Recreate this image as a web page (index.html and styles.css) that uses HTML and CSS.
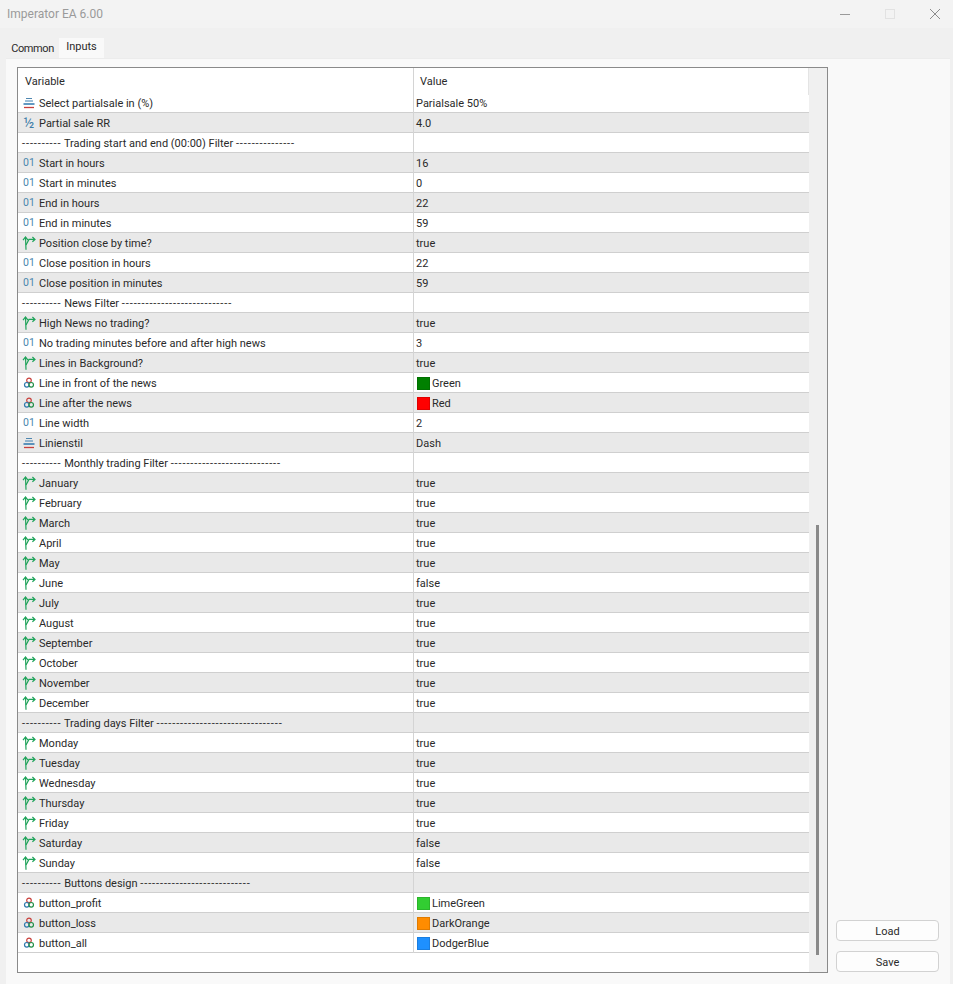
FILE: index.html
```html
<!DOCTYPE html>
<html lang="en">
<head>
<meta charset="utf-8">
<title>Imperator EA 6.00</title>
<link rel="stylesheet" href="styles.css">
</head>
<body>
<svg class="defs" width="0" height="0" aria-hidden="true">
  <symbol id="i-enum" viewBox="0 0 14 14">
    <path d="M4 2.5h6" stroke="#4f87b0" stroke-width="1" fill="none"/>
    <path d="M3 5h8" stroke="#3d7fb0" stroke-width="1" fill="none"/>
    <path d="M1.5 8h11" stroke="#1f6da8" stroke-width="1.4" fill="none"/>
    <path d="M2 11.5h10" stroke="#c8403c" stroke-width="1.3" fill="none"/>
  </symbol>
  <symbol id="i-bool" viewBox="0 0 14 14">
    <path d="M4 13.8L3.5 1.2M1 4.2L3.5 1L6 4.2" stroke="#1fa35a" stroke-width="1.2" fill="none"/>
    <path d="M4 9L7 3.4H13M10.4 1L13 3.4L10.4 5.8" stroke="#1fa35a" stroke-width="1.2" fill="none"/>
  </symbol>
  <symbol id="i-color" viewBox="0 0 14 14">
    <circle cx="7" cy="4.4" r="2.3" stroke="#c8403c" stroke-width="1.2" fill="none"/>
    <circle cx="4.8" cy="8.8" r="2.3" stroke="#2f78ad" stroke-width="1.2" fill="none"/>
    <circle cx="9.2" cy="8.8" r="2.3" stroke="#23904a" stroke-width="1.2" fill="none"/>
  </symbol>
</svg>

<header class="titlebar">
  <span class="title">Imperator EA 6.00</span>
  <div class="controls">
    <svg class="ctl" width="12" height="12" viewBox="0 0 12 12"><path d="M1 6.5h10" stroke="#9a9a9a" fill="none"/></svg>
    <svg class="ctl" width="12" height="12" viewBox="0 0 12 12"><rect x="1.5" y="1.5" width="9" height="9" stroke="#e2e2e2" fill="none"/></svg>
    <svg class="ctl" width="12" height="12" viewBox="0 0 12 12"><path d="M1 1l10 10M11 1L1 11" stroke="#8c8c8c" fill="none"/></svg>
  </div>
</header>

<nav class="tabs">
  <span class="tab">Common</span>
  <span class="tab active">Inputs</span>
</nav>

<main class="panel">
  <section class="box">
    <div class="list">
      <div class="row head"><div class="var">Variable</div><div class="val">Value</div></div>
      <div id="rows">
        <div class="row"><div class="var"><svg class="ic"><use href="#i-enum"/></svg>Select partialsale in (%)</div><div class="val">Parialsale 50%</div></div>
        <div class="row"><div class="var"><span class="ic half">½</span>Partial sale RR</div><div class="val">4.0</div></div>
        <div class="row"><div class="var"><span class="sec"><span class="dash">----------</span> Trading start and end (00:00) Filter <span class="dash">---------------</span></span></div><div class="val"></div></div>
        <div class="row"><div class="var"><span class="ic num">01</span>Start in hours</div><div class="val">16</div></div>
        <div class="row"><div class="var"><span class="ic num">01</span>Start in minutes</div><div class="val">0</div></div>
        <div class="row"><div class="var"><span class="ic num">01</span>End in hours</div><div class="val">22</div></div>
        <div class="row"><div class="var"><span class="ic num">01</span>End in minutes</div><div class="val">59</div></div>
        <div class="row"><div class="var"><svg class="ic"><use href="#i-bool"/></svg>Position close by time?</div><div class="val">true</div></div>
        <div class="row"><div class="var"><span class="ic num">01</span>Close position in hours</div><div class="val">22</div></div>
        <div class="row"><div class="var"><span class="ic num">01</span>Close position in minutes</div><div class="val">59</div></div>
        <div class="row"><div class="var"><span class="sec"><span class="dash">----------</span> News Filter <span class="dash">----------------------------</span></span></div><div class="val"></div></div>
        <div class="row"><div class="var"><svg class="ic"><use href="#i-bool"/></svg>High News no trading?</div><div class="val">true</div></div>
        <div class="row"><div class="var"><span class="ic num">01</span>No trading minutes before and after high news</div><div class="val">3</div></div>
        <div class="row"><div class="var"><svg class="ic"><use href="#i-bool"/></svg>Lines in Background?</div><div class="val">true</div></div>
        <div class="row"><div class="var"><svg class="ic"><use href="#i-color"/></svg>Line in front of the news</div><div class="val"><span class="sw green"></span>Green</div></div>
        <div class="row"><div class="var"><svg class="ic"><use href="#i-color"/></svg>Line after the news</div><div class="val"><span class="sw red"></span>Red</div></div>
        <div class="row"><div class="var"><span class="ic num">01</span>Line width</div><div class="val">2</div></div>
        <div class="row"><div class="var"><svg class="ic"><use href="#i-enum"/></svg>Linienstil</div><div class="val">Dash</div></div>
        <div class="row"><div class="var"><span class="sec"><span class="dash">----------</span> Monthly trading Filter <span class="dash">----------------------------</span></span></div><div class="val"></div></div>
        <div class="row"><div class="var"><svg class="ic"><use href="#i-bool"/></svg>January</div><div class="val">true</div></div>
        <div class="row"><div class="var"><svg class="ic"><use href="#i-bool"/></svg>February</div><div class="val">true</div></div>
        <div class="row"><div class="var"><svg class="ic"><use href="#i-bool"/></svg>March</div><div class="val">true</div></div>
        <div class="row"><div class="var"><svg class="ic"><use href="#i-bool"/></svg>April</div><div class="val">true</div></div>
        <div class="row"><div class="var"><svg class="ic"><use href="#i-bool"/></svg>May</div><div class="val">true</div></div>
        <div class="row"><div class="var"><svg class="ic"><use href="#i-bool"/></svg>June</div><div class="val">false</div></div>
        <div class="row"><div class="var"><svg class="ic"><use href="#i-bool"/></svg>July</div><div class="val">true</div></div>
        <div class="row"><div class="var"><svg class="ic"><use href="#i-bool"/></svg>August</div><div class="val">true</div></div>
        <div class="row"><div class="var"><svg class="ic"><use href="#i-bool"/></svg>September</div><div class="val">true</div></div>
        <div class="row"><div class="var"><svg class="ic"><use href="#i-bool"/></svg>October</div><div class="val">true</div></div>
        <div class="row"><div class="var"><svg class="ic"><use href="#i-bool"/></svg>November</div><div class="val">true</div></div>
        <div class="row"><div class="var"><svg class="ic"><use href="#i-bool"/></svg>December</div><div class="val">true</div></div>
        <div class="row"><div class="var"><span class="sec"><span class="dash">----------</span> Trading days Filter <span class="dash">--------------------------------</span></span></div><div class="val"></div></div>
        <div class="row"><div class="var"><svg class="ic"><use href="#i-bool"/></svg>Monday</div><div class="val">true</div></div>
        <div class="row"><div class="var"><svg class="ic"><use href="#i-bool"/></svg>Tuesday</div><div class="val">true</div></div>
        <div class="row"><div class="var"><svg class="ic"><use href="#i-bool"/></svg>Wednesday</div><div class="val">true</div></div>
        <div class="row"><div class="var"><svg class="ic"><use href="#i-bool"/></svg>Thursday</div><div class="val">true</div></div>
        <div class="row"><div class="var"><svg class="ic"><use href="#i-bool"/></svg>Friday</div><div class="val">true</div></div>
        <div class="row"><div class="var"><svg class="ic"><use href="#i-bool"/></svg>Saturday</div><div class="val">false</div></div>
        <div class="row"><div class="var"><svg class="ic"><use href="#i-bool"/></svg>Sunday</div><div class="val">false</div></div>
        <div class="row"><div class="var"><span class="sec"><span class="dash">----------</span> Buttons design <span class="dash">----------------------------</span></span></div><div class="val"></div></div>
        <div class="row"><div class="var"><svg class="ic"><use href="#i-color"/></svg>button_profit</div><div class="val"><span class="sw lime"></span>LimeGreen</div></div>
        <div class="row"><div class="var"><svg class="ic"><use href="#i-color"/></svg>button_loss</div><div class="val"><span class="sw orange"></span>DarkOrange</div></div>
        <div class="row"><div class="var"><svg class="ic"><use href="#i-color"/></svg>button_all</div><div class="val"><span class="sw blue"></span>DodgerBlue</div></div>
      </div>
    </div>
    <div class="track"><div class="thumb"></div></div>
  </section>
  <aside class="side">
    <button class="btn">Load</button>
    <button class="btn">Save</button>
  </aside>
</main>
</body>
</html>
```

FILE: styles.css
```css
* { box-sizing: border-box; }
html, body { height: 100%; }
body {
  margin: 0;
  height: 984px;
  overflow: hidden;
  display: flex;
  flex-direction: column;
  background: #f0f0f0;
  color: #2a2a2a;
  font-family: Roboto, Lato, sans-serif;
  font-size: 11px;
}
.defs { position: absolute; }

.titlebar {
  height: 28px;
  flex: none;
  display: flex;
  align-items: center;
  justify-content: space-between;
  padding: 0 12px 0 7px;
  background: #f3f3f3;
}
.title { color: #9a9a9a; font-size: 12px; }
.controls { display: flex; gap: 33px; }
.ctl { display: block; }

.tabs {
  height: 30px;
  flex: none;
  display: flex;
  align-items: flex-end;
  padding-left: 7px;
  gap: 1px;
}
.tab {
  height: 18px;
  width: 51px;
  text-align: center;
  line-height: 18px;
  letter-spacing: -0.4px;
}
.tab.active {
  height: 20px;
  width: 45px;
  line-height: 17px;
  letter-spacing: 0;
  background: #f9f9f9;
}

.panel {
  flex: 1;
  display: flex;
  margin: 0 3px 0 6px;
  padding: 8px 11px 11px 11px;
  background: #f9f9f9;
  border-top: 1px solid #ececec;
}
.box {
  width: 811px;
  height: 906px;
  flex: none;
  display: flex;
  background: #fff;
  border: 1px solid #8a8a8a;
}
.list { width: 791px; flex: none; }

.row {
  display: grid;
  grid-template-columns: 396px 1fr;
  height: 20px;
  line-height: 19px;
  border-bottom: 1px solid #cfcfcf;
  white-space: nowrap;
}
.row.head { height: 25px; line-height: 26px; border-bottom: 0; }
#rows .row:nth-child(even) { background: #e9e9e9; }

.var {
  display: flex;
  align-items: center;
  padding: 1px 0 0 4px;
  border-right: 1px solid #d4d4d4;
  overflow: hidden;
}
.head .var { padding-left: 7px; }
.sec { display: block; padding-top: 1px; }
.dash { letter-spacing: 0.9px; }
.val {
  display: flex;
  align-items: center;
  padding: 1px 0 0 2px;
}
.head .val { padding-left: 6px; border-right: 1px solid #e4e4e4; }

.ic {
  flex: none;
  display: block;
  width: 14px;
  height: 14px;
  margin: 0 3px 1px 0;
}
.ic.num {
  color: #4a86ad;
  font-size: 10.5px;
  line-height: 14px;
  text-align: center;
}
.ic.half {
  color: #3f7ea8;
  font-size: 14px;
  line-height: 14px;
  text-align: center;
}

.sw {
  width: 13px;
  height: 13px;
  margin: 0 2px 1px 1px;
  flex: none;
  border: 1px solid rgba(0, 0, 0, 0.12);
}
.sw.green { background: #008000; }
.sw.red { background: #ff0000; }
.sw.lime { background: #32cd32; }
.sw.orange { background: #ff8c00; }
.sw.blue { background: #1e90ff; }

.track {
  flex: 1;
  background: #f0f0f0;
  padding: 457px 0 0 7px;
}
.thumb {
  width: 3px;
  height: 430px;
  background: #8a8a8a;
}

.side {
  flex: 1;
  display: flex;
  flex-direction: column;
  justify-content: flex-end;
  align-items: flex-end;
  gap: 10px;
  padding: 0 0 1px 0;
}
.btn {
  width: 103px;
  height: 21px;
  padding: 1px 0 0;
  background: #fdfdfd;
  border: 1px solid #d2d2d2;
  border-radius: 4px;
  color: #2a2a2a;
  font: inherit;
}
```
